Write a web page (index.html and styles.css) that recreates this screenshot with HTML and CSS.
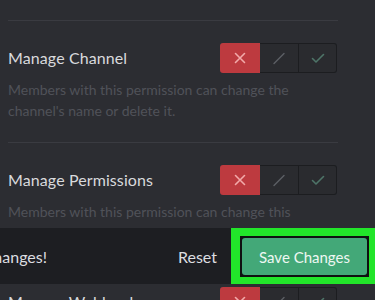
FILE: index.html
```html
<!DOCTYPE html>
<html lang="en">
<head>
<meta charset="utf-8">
<title>Channel permissions</title>
<link rel="stylesheet" href="styles.css">
</head>
<body>
<div class="screen">
  <div class="list">
    <section class="perm">
      <div class="perm-head">
        <h3 class="perm-title">Manage Channel</h3>
        <div class="toggle">
          <span class="seg seg-deny"><svg viewBox="0 0 14 14" width="14" height="14"><path d="M2.5 2.5L11.5 11.5M11.5 2.5L2.5 11.5" stroke="#f2a9a9" stroke-width="1.6" stroke-linecap="round" fill="none"/></svg></span>
          <span class="seg"><svg viewBox="0 0 14 14" width="14" height="14"><path d="M2 12.5L12 2.5" stroke="#5c5f65" stroke-width="1.4" stroke-linecap="round" fill="none"/></svg></span>
          <span class="seg seg-last"><svg viewBox="0 0 14 14" width="14" height="14"><path d="M1.5 7.5L5 11L12.5 3.5" stroke="#4e7468" stroke-width="1.6" stroke-linecap="round" stroke-linejoin="round" fill="none"/></svg></span>
        </div>
      </div>
      <p class="perm-desc">Members with this permission can change the channel's name or delete it.</p>
    </section>
    <section class="perm">
      <div class="perm-head">
        <h3 class="perm-title">Manage Permissions</h3>
        <div class="toggle">
          <span class="seg seg-deny"><svg viewBox="0 0 14 14" width="14" height="14"><path d="M2.5 2.5L11.5 11.5M11.5 2.5L2.5 11.5" stroke="#f2a9a9" stroke-width="1.6" stroke-linecap="round" fill="none"/></svg></span>
          <span class="seg"><svg viewBox="0 0 14 14" width="14" height="14"><path d="M2 12.5L12 2.5" stroke="#5c5f65" stroke-width="1.4" stroke-linecap="round" fill="none"/></svg></span>
          <span class="seg seg-last"><svg viewBox="0 0 14 14" width="14" height="14"><path d="M1.5 7.5L5 11L12.5 3.5" stroke="#4e7468" stroke-width="1.6" stroke-linecap="round" stroke-linejoin="round" fill="none"/></svg></span>
        </div>
      </div>
      <p class="perm-desc">Members with this permission can change this channel's permissions.</p>
    </section>
    <section class="perm">
      <div class="perm-head">
        <h3 class="perm-title">Manage Webhooks</h3>
        <div class="toggle">
          <span class="seg seg-deny"><svg viewBox="0 0 14 14" width="14" height="14"><path d="M2.5 2.5L11.5 11.5M11.5 2.5L2.5 11.5" stroke="#f2a9a9" stroke-width="1.6" stroke-linecap="round" fill="none"/></svg></span>
          <span class="seg"><svg viewBox="0 0 14 14" width="14" height="14"><path d="M2 12.5L12 2.5" stroke="#5c5f65" stroke-width="1.4" stroke-linecap="round" fill="none"/></svg></span>
          <span class="seg seg-last"><svg viewBox="0 0 14 14" width="14" height="14"><path d="M1.5 7.5L5 11L12.5 3.5" stroke="#4e7468" stroke-width="1.6" stroke-linecap="round" stroke-linejoin="round" fill="none"/></svg></span>
        </div>
      </div>
      <p class="perm-desc">Members with this permission can create, edit, and delete webhooks.</p>
    </section>
  </div>

  <div class="save-bar">
    <div class="notice"><span class="notice-text">Careful — you have unsaved changes!</span></div>
    <button class="reset" type="button">Reset</button>
    <div class="highlight">
      <button class="save" type="button">Save Changes</button>
    </div>
  </div>
</div>
</body>
</html>
```

FILE: styles.css
```css
* { box-sizing: border-box; }

html, body {
  margin: 0;
  padding: 0;
  background: #2c2d32;
}

body {
  font-family: Lato, "Noto Sans", "Liberation Sans", sans-serif;
  color: #dcdde0;
}

.screen {
  position: relative;
  width: 375px;
  height: 300px;
  overflow: hidden;
  background: #2c2d32;
}

.list {
  padding: 20px 0 0 8px;
  width: 338px;
}

.perm {
  border-top: 1px solid #3a3b41;
  padding: 22px 0 21px;
}

.perm-head {
  display: flex;
  align-items: center;
  justify-content: space-between;
  height: 30px;
}

.perm-title {
  margin: 0;
  font-size: 16px;
  font-weight: 400;
  color: #d9dadd;
  letter-spacing: 0.1px;
  position: relative;
  top: -1px;
}

.toggle {
  display: flex;
  height: 30px;
  margin-right: 1px;
}

.seg {
  display: flex;
  align-items: center;
  justify-content: center;
  width: 39px;
  height: 30px;
  background: #2a2b2f;
  border: 1px solid #1c1d20;
  border-left: none;
}

.seg-deny {
  width: 40px;
  background: #bd3a3f;
  border: none;
  border-radius: 3px 0 0 3px;
}

.seg-last {
  width: 38px;
  border-radius: 0 3px 3px 0;
}

.perm-desc {
  margin: 6px 0 0;
  width: 300px;
  font-size: 14px;
  line-height: 21px;
  color: #505259;
}

.save-bar {
  position: absolute;
  left: 0;
  right: 0;
  top: 228px;
  height: 56px;
  display: flex;
  align-items: stretch;
  background: #1d1e22;
  overflow: hidden;
}

.notice {
  flex: 0 0 47px;
  width: 47px;
  min-width: 0;
  display: flex;
  justify-content: flex-end;
  align-items: center;
  white-space: nowrap;
}

.notice-text {
  font-size: 16px;
  color: #dcdde0;
  flex: 0 0 auto;
}

.reset {
  margin-left: auto;
  margin-right: 14px;
  padding: 0;
  border: none;
  background: none;
  font-family: inherit;
  font-size: 16px;
  color: #dcdde0;
  cursor: pointer;
}

.highlight {
  flex: 0 0 144px;
  border-style: solid;
  border-color: #22e52a;
  border-width: 8px 6px 7px 9px;
  background: #0f1011;
  padding: 2px;
  display: flex;
}

.save {
  flex: 1;
  border: none;
  border-radius: 3px;
  background: #43a878;
  color: #eef7f2;
  font-family: inherit;
  font-size: 15px;
  cursor: pointer;
}
```
